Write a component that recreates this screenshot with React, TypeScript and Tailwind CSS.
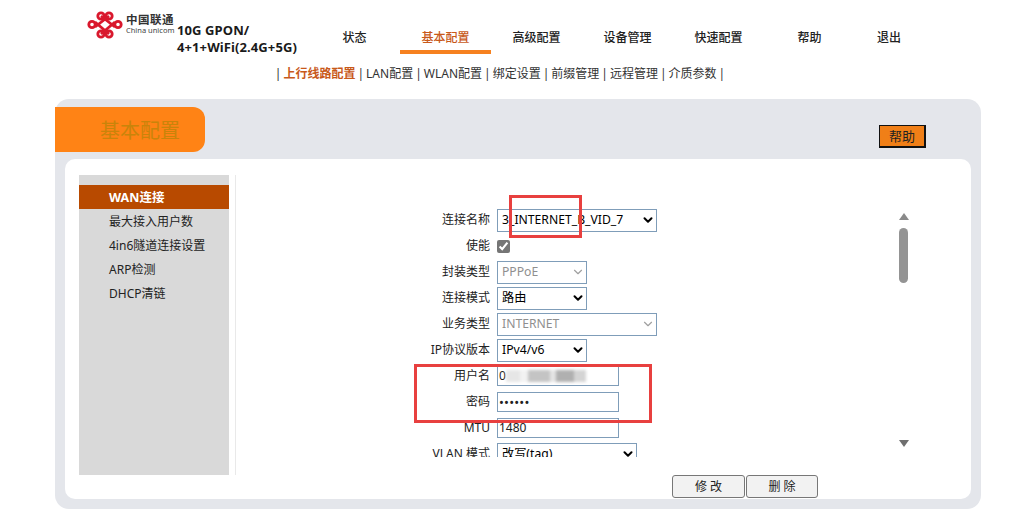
import { ChevronDown } from "lucide-react";

const topNav = [
  { label: "状态", w: "w-[91px]" },
  { label: "基本配置", w: "w-[91px]", active: true },
  { label: "高级配置", w: "w-[91px]" },
  { label: "设备管理", w: "w-[91px]" },
  { label: "快速配置", w: "w-[91px]" },
  { label: "帮助", w: "w-[91px]" },
  { label: "退出", w: "w-[68px]" },
];

const subNav = ["LAN配置", "WLAN配置", "绑定设置", "前缀管理", "远程管理", "介质参数"];
const sideItems = ["最大接入用户数", "4in6隧道连接设置", "ARP检测", "DHCP清链"];

const Logo = () => (
  <svg width="36" height="28" viewBox="0 0 36 28" fill="none" stroke="#d9182d" strokeWidth="2.8">
    <circle cx="5" cy="13.5" r="3.2" />
    <circle cx="31" cy="13.5" r="3.2" />
    <circle cx="14" cy="5" r="3.2" />
    <circle cx="22" cy="5" r="3.2" />
    <circle cx="14" cy="23" r="3.2" />
    <circle cx="22" cy="23" r="3.2" />
    <path d="M8 11 L22 23 M8 16 L22 5 M28 11 L14 23 M28 16 L14 5" />
  </svg>
);

const Select = ({ value, w, disabled }: { value: string; w: string; disabled?: boolean }) => (
  <div className={`relative flex h-[23px] items-center border border-[#7f9db9] bg-white pl-[4px] ${w}`}>
    <span className={`text-[12.2px] ${disabled ? "text-[#8f8f8f]" : "text-black"}`}>{value}</span>
    <ChevronDown
      size={14}
      strokeWidth={disabled ? 2 : 3.4}
      className={`ml-auto mr-[1px] ${disabled ? "text-[#a0a0a0]" : "text-black"}`}
    />
  </div>
);

const Input = ({ children }: { children: React.ReactNode }) => (
  <div className="flex h-[20px] w-[122px] items-center overflow-hidden border border-[#7f9db9] bg-white pl-[1px]">
    {children}
  </div>
);

const Row = ({ label, children }: { label: string; children: React.ReactNode }) => (
  <div className="flex h-[26px] items-center">
    <div className="w-[254px] text-right text-[#222]">{label}</div>
    <div className="ml-[7px]">{children}</div>
  </div>
);

const App = () => {
  return (
    <div className="relative h-[521px] w-[1033px] overflow-hidden bg-white font-['Noto_Sans','Noto_Sans_CJK_SC',sans-serif] text-[12px] text-[#222]">
      {/* header */}
      <div className="flex h-[60px]">
        <div className="ml-[87px] mt-[11px] flex h-[28px] w-[90px] items-start">
          <Logo />
          <div className="ml-[3px] mt-[3px]">
            <div className="text-[11.5px] font-semibold leading-[12px] tracking-[0.5px] text-[#333]">中国联通</div>
            <div className="text-[7.5px] leading-[9px] text-[#444]">China unicom</div>
          </div>
        </div>
        <div className="mt-[22px] w-[132px] text-[13px] font-bold leading-[17px] tracking-[0.1px] text-[#1a1a1a]">
          <div>10G GPON/</div>
          <div>4+1+WiFi(2.4G+5G)</div>
        </div>
        <nav className="flex h-[54px] items-start">
          {topNav.map((item) => (
            <div
              key={item.label}
              className={`flex h-[54px] items-center justify-center border-b-[4px] pt-[26px] font-medium ${item.w} ${
                item.active ? "border-[#f6811f] text-[#c8591a]" : "border-transparent text-[#222]"
              }`}
            >
              {item.label}
            </div>
          ))}
        </nav>
      </div>

      <div className="mt-[5px] flex h-[17px] items-center justify-center gap-[2px] pr-[33px] text-[#333]">
        <span>|</span>
        <span className="font-bold text-[#c8591a]">上行线路配置</span>
        {subNav.map((s) => (
          <span key={s} className="flex gap-[2px]">
            <span>|</span>
            <span>{s}</span>
          </span>
        ))}
        <span>|</span>
      </div>

      {/* main panel */}
      <div className="relative ml-[55px] mt-[17px] h-[410px] w-[926px] rounded-[14px] bg-[#e4e6eb] pt-[8px]">
        <div className="flex h-[45px] w-[150px] items-center rounded-r-[12px] bg-[#ff8315] pl-[45px] pt-[3px] text-[20px] text-[#c9840a]">
          基本配置
        </div>
        <div className="absolute right-[55px] top-[26px] flex h-[23px] w-[47px] items-center justify-center border border-b-2 border-r-2 border-[#111] bg-[#f07f17] pt-[1px] text-[13px] text-[#222]">
          帮助
        </div>

        <div className="ml-[10px] mt-[7px] flex h-[340px] w-[906px] items-start rounded-[10px] bg-white pl-[14px] pt-[16px]">
          <aside className="h-[300px] w-[150px] bg-[#d9d9d9] pt-[10px]">
            <div className="flex h-[24px] items-center bg-[#b84a00] pl-[30px] pt-[2px] text-[12.5px] font-bold text-white">
              WAN连接
            </div>
            {sideItems.map((s) => (
              <div key={s} className="flex h-[24px] items-center pl-[30px] pt-[2px] text-[#222]">
                {s}
              </div>
            ))}
          </aside>
          <div className="ml-[6px] h-[300px] w-[1px] bg-[#e9e9e9]" />

          <div className="flex w-[735px] flex-col">
            <div className="flex h-[282px]">
              <div className="h-[282px] w-[663px] overflow-hidden pt-[32px]">
                <Row label="连接名称">
                  <Select value="3_INTERNET_B_VID_7" w="w-[160px]" />
                </Row>
                <Row label="使能">
                  <input type="checkbox" checked readOnly className="block size-[13px] accent-[#757575]" />
                </Row>
                <Row label="封装类型">
                  <Select value="PPPoE" w="w-[90px]" disabled />
                </Row>
                <Row label="连接模式">
                  <Select value="路由" w="w-[90px]" />
                </Row>
                <Row label="业务类型">
                  <Select value="INTERNET" w="w-[160px]" disabled />
                </Row>
                <Row label="IP协议版本">
                  <Select value="IPv4/v6" w="w-[90px]" />
                </Row>
                <Row label="用户名">
                  <Input>
                    <span>0</span>
                    <div className="flex h-[12px] w-[80px] bg-[#ececec] blur-[1.5px]">
                      <span className="w-[14px] bg-[#e6e6e6]" />
                      <span className="w-[8px] bg-[#f2f2f2]" />
                      <span className="w-[22px] bg-[#c4c4c4]" />
                      <span className="w-[6px] bg-[#e4e4e4]" />
                      <span className="w-[18px] bg-[#b0b0b0]" />
                      <span className="w-[12px] bg-[#d4d4d4]" />
                    </div>
                  </Input>
                </Row>
                <Row label="密码">
                  <Input>
                    <span className="text-[13px] leading-none tracking-[0.2px]">••••••</span>
                  </Input>
                </Row>
                <Row label="MTU">
                  <Input>
                    <span>1480</span>
                  </Input>
                </Row>
                <Row label="VLAN 模式">
                  <Select value="改写(tag)" w="w-[140px]" />
                </Row>
              </div>
              <div className="flex w-[9px] flex-col items-center pt-[38px]">
                <div className="h-0 w-0 border-x-[5px] border-b-[7px] border-x-transparent border-b-[#8a8a8a]" />
                <div className="mt-[8px] h-[55px] w-[9px] shrink-0 rounded-full bg-[#949494]" />
                <div className="mt-[157px] h-0 w-0 border-x-[5px] border-t-[7px] border-x-transparent border-t-[#6f6f6f]" />
              </div>
            </div>
            <div className="ml-[436px] mt-[18px] flex gap-[1px]">
              <button className="h-[23px] w-[73px] rounded-[3px] border border-[#777] bg-[#f2f2f2] pt-[1px] text-[#222]">修 改</button>
              <button className="h-[23px] w-[72px] rounded-[3px] border border-[#777] bg-[#f2f2f2] pt-[1px] text-[#222]">删 除</button>
            </div>
          </div>
        </div>
      </div>

      {/* red markers drawn over the page */}
      <div className="absolute left-[509px] top-[195px] h-[43px] w-[73px] border-[3px] border-[#e8403f]" />
      <div className="absolute left-[414px] top-[364px] h-[59px] w-[238px] border-[3px] border-[#e8403f]" />
    </div>
  );
};

export default App;
